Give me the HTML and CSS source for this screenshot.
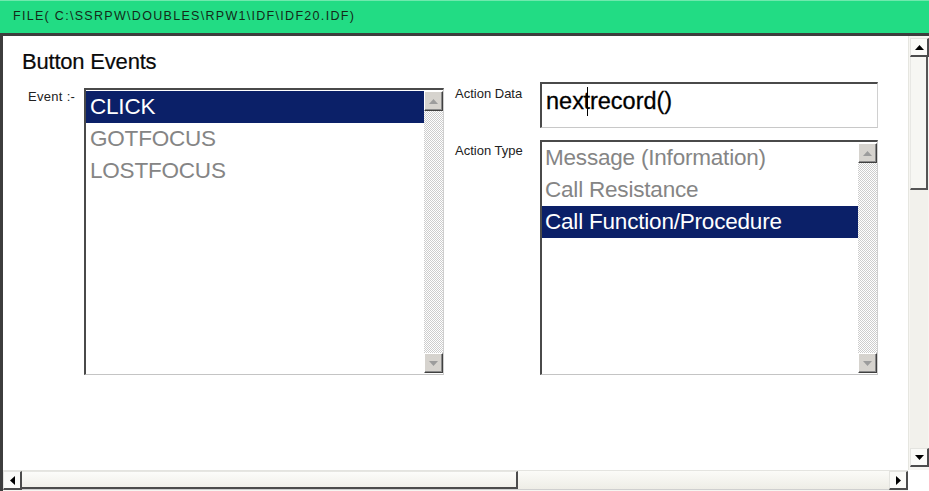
FILE: index.html
```html
<!DOCTYPE html>
<html>
<head>
<meta charset="utf-8">
<link rel="stylesheet" href="styles.css">
</head>
<body>
<div class="titlebar">FILE( C:\SSRPW\DOUBLES\RPW1\IDF\IDF20.IDF)</div>
<div class="frame">
  <div class="content">
    <div class="heading">Button Events</div>
    <div class="form">
      <div class="event-group">
        <div class="label">Event :-</div>
        <div class="listbox event-list">
          <ul class="items">
            <li class="item selected">CLICK</li>
            <li class="item">GOTFOCUS</li>
            <li class="item">LOSTFOCUS</li>
          </ul>
          <div class="lb-scroll">
            <div class="lb-btn"><svg width="9" height="5" viewBox="0 0 9 5"><path d="M0 5 L4.5 0 L9 5 Z" fill="#9c9c9c"/></svg></div>
            <div class="lb-track"></div>
            <div class="lb-btn"><svg width="9" height="5" viewBox="0 0 9 5"><path d="M0 0 L4.5 5 L9 0 Z" fill="#9c9c9c"/></svg></div>
          </div>
        </div>
      </div>
      <div class="action-group">
        <div class="label label-data">Action Data</div>
        <div class="textbox">nex<span class="caret"></span>trecord()</div>
        <div class="label label-type">Action Type</div>
        <div class="listbox type-list">
          <ul class="items">
            <li class="item">Message (Information)</li>
            <li class="item">Call Resistance</li>
            <li class="item selected">Call Function/Procedure</li>
          </ul>
          <div class="lb-scroll">
            <div class="lb-btn"><svg width="9" height="5" viewBox="0 0 9 5"><path d="M0 5 L4.5 0 L9 5 Z" fill="#9c9c9c"/></svg></div>
            <div class="lb-track"></div>
            <div class="lb-btn"><svg width="9" height="5" viewBox="0 0 9 5"><path d="M0 0 L4.5 5 L9 0 Z" fill="#9c9c9c"/></svg></div>
          </div>
        </div>
      </div>
    </div>
  </div>
  <div class="vscroll">
    <div class="sb-btn"><svg width="9" height="5" viewBox="0 0 9 5"><path d="M0 5 L4.5 0 L9 5 Z" fill="#000"/></svg></div>
    <div class="sb-track vtrack"><div class="vthumb"></div></div>
    <div class="sb-btn"><svg width="9" height="5" viewBox="0 0 9 5"><path d="M0 0 L4.5 5 L9 0 Z" fill="#000"/></svg></div>
  </div>
  <div class="hscroll">
    <div class="sb-btn"><svg width="5" height="9" viewBox="0 0 5 9"><path d="M5 0 L0 4.5 L5 9 Z" fill="#000"/></svg></div>
    <div class="sb-track htrack"><div class="hthumb"></div></div>
    <div class="sb-btn"><svg width="5" height="9" viewBox="0 0 5 9"><path d="M0 0 L5 4.5 L0 9 Z" fill="#000"/></svg></div>
  </div>
  <div class="corner"></div>
</div>
</body>
</html>
```

FILE: styles.css
```css
* { box-sizing: border-box; }
html, body {
  margin: 0;
  padding: 0;
  width: 929px;
  height: 491px;
  overflow: hidden;
  background: #fff;
  font-family: "Liberation Sans", Arial, sans-serif;
}
.titlebar {
  height: 33px;
  background: #22dc84;
  border-top: 1px solid #6fe9ad;
  padding-left: 13px;
  font-size: 12.5px;
  letter-spacing: 1.3px;
  line-height: 31px;
  color: #132a18;
  white-space: nowrap;
}
.frame {
  height: 458px;
  border-left: 3px solid #3d3d3d;
  border-top: 3px solid #3d3d3d;
  display: grid;
  grid-template-columns: 905px 21px;
  grid-template-rows: 434px 21px;
  background: #fff;
}
.content {
  padding: 13px 0 0 19px;
  overflow: hidden;
}
.heading {
  font-size: 22px;
  line-height: 25px;
  color: #0a0a0a;
  letter-spacing: -0.2px;
  -webkit-text-stroke: 0.2px #0a0a0a;
}
.form {
  display: flex;
  margin-top: 8px;
}
.event-group {
  display: flex;
  margin-left: 6px;
  margin-top: 6px;
}
.label {
  font-size: 13px;
  line-height: 15px;
  color: #222;
  white-space: nowrap;
}
.event-group .label {
  width: 56px;
  padding-top: 1px;
  letter-spacing: 0.3px;
}
.action-group {
  margin-left: 11px;
  display: grid;
  grid-template-columns: 85px 338px;
  grid-template-rows: 46px 235px;
  row-gap: 12px;
}
.label-data { padding-top: 4px; }
.label-type { padding-top: 3px; }
.listbox {
  display: flex;
  border-left: 2px solid #4a4a4a;
  border-top: 2px solid #4a4a4a;
  border-right: 1px solid #cfcfcf;
  border-bottom: 1px solid #c4c4c4;
  background: #fff;
}
.event-list {
  width: 360px;
  height: 287px;
}
.items {
  list-style: none;
  margin: 0;
  padding: 1px 0 0 0;
  flex: 1;
}
.item {
  height: 32px;
  line-height: 32px;
  font-size: 22.5px;
  color: #858585;
  padding-left: 4px;
  white-space: nowrap;
  letter-spacing: -0.2px;
}
.type-list .items { padding-top: 0; }
.type-list .item { padding-left: 3px; }
.item.selected {
  background: #0b2068;
  color: #fff;
}
.lb-scroll {
  width: 19px;
  display: flex;
  flex-direction: column;
  padding: 1px 0;
}
.lb-btn {
  height: 20px;
  background: #d6d3ce;
  border-top: 1px solid #fff;
  border-left: 1px solid #fff;
  border-right: 1px solid #404040;
  border-bottom: 1px solid #404040;
  box-shadow: inset -1px -1px 0 #8a8a8a;
  display: flex;
  align-items: center;
  justify-content: center;
}
.lb-track {
  flex: 1;
  background: repeating-conic-gradient(#cdcdcd 0 25%, #fff 0 50%) 0 0 / 2px 2px;
}
.textbox {
  border-left: 2px solid #4a4a4a;
  border-top: 2px solid #4a4a4a;
  border-right: 1px solid #d0d0d0;
  border-bottom: 1px solid #c8c8c8;
  padding: 3px 0 0 4px;
  font-size: 23.5px;
  line-height: 26px;
  color: #000;
  white-space: nowrap;
  -webkit-text-stroke: 0.3px #000;
}
.caret {
  display: inline-block;
  width: 0;
  height: 29px;
  border-left: 1.5px solid #000;
  vertical-align: -7px;
  margin-left: 3px;
  margin-right: -4.5px;
}
.type-list {
  height: 235px;
}
.vscroll {
  display: flex;
  flex-direction: column;
  padding: 2px 1px 3px 1px;
  border-left: 1px solid #e6e6e0;
  background: #f6f5f1;
}
.sb-btn {
  flex: none;
  width: 19px;
  height: 19px;
  background: #fbfbf8;
  border-top: 1px solid #e4e4e0;
  border-left: 1px solid #e4e4e0;
  border-right: 2px solid #4c4c4c;
  border-bottom: 2px solid #4c4c4c;
  display: flex;
  align-items: center;
  justify-content: center;
}
.sb-track {
  flex: 1;
  display: flex;
  background: #f2f1ec;
}
.vtrack { flex-direction: column; }
.vthumb {
  height: 133px;
  background: #f7f7f3;
  border-left: 1px solid #e8e8e4;
  border-right: 2px solid #555;
  border-bottom: 2px solid #555;
}
.hscroll {
  display: flex;
  background: #f6f5f1;
  border-top: 1px solid #e4e4e0;
  padding-bottom: 1px;
}
.hscroll .sb-btn { height: 19px; }
.htrack {
  background: linear-gradient(#fbfbf8, #eeede6);
  border-bottom: 1px solid #cfcfcf;
}
.hthumb {
  width: 496px;
  background: linear-gradient(#fcfcfa, #f1f0ea);
  border-top: 1px solid #e6e6e2;
  border-right: 2px solid #4c4c4c;
  border-bottom: 2px solid #4c4c4c;
}
.corner { background: #fff; }
```
